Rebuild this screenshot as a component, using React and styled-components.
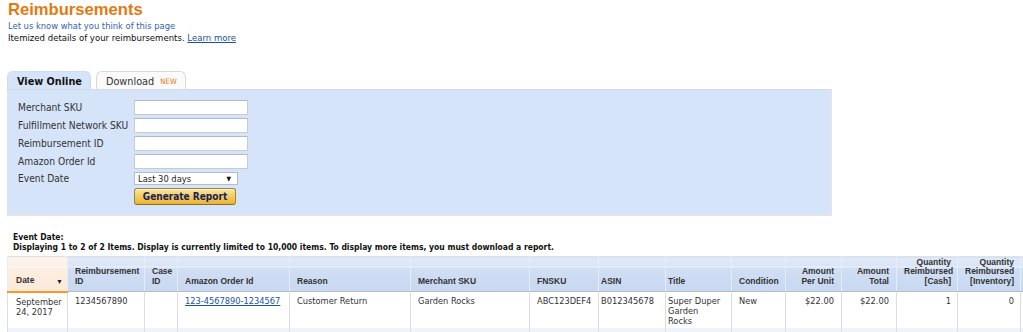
import React from 'react';
import styled, { createGlobalStyle } from 'styled-components';

const GlobalStyle = createGlobalStyle`
  html, body {
    margin: 0;
    padding: 0;
    overflow: hidden;
    background: #fff;
  }
  body {
    font-family: "DejaVu Sans Condensed", "DejaVu Sans", sans-serif;
    font-stretch: condensed;
    color: #333;
  }
`;

const Page = styled.div`
  padding: 0 0 0 7px;
`;

const Title = styled.h1`
  margin: 0;
  padding-left: 1px;
  font-family: "Liberation Sans", Arial, sans-serif;
  font-stretch: normal;
  font-size: 16.6px;
  line-height: 20px;
  font-weight: bold;
  color: #e47911;
`;

const Feedback = styled.a`
  display: block;
  padding-left: 1px;
  font-size: 9.3px;
  line-height: 11px;
  color: #2f63b0;
  text-decoration: none;
`;

const Intro = styled.p`
  margin: 1px 0 0;
  padding-left: 1px;
  font-size: 9.5px;
  line-height: 11px;
  color: #111;
`;

const Link = styled.a`
  color: #1c52a3;
  text-decoration: underline;
`;

const TabBar = styled.div`
  display: flex;
  align-items: flex-end;
  gap: 5px;
  margin-top: 28px;
  height: 18px;
`;

const Tab = styled.div`
  box-sizing: border-box;
  height: 18px;
  display: flex;
  align-items: center;
  gap: 6px;
  padding: 1px 8px 0 9px;
  font-size: 10.8px;
  font-weight: ${p => (p.active ? 'bold' : 'normal')};
  color: ${p => (p.active ? '#111' : '#333')};
  background: ${p => (p.active ? '#d6e4f9' : '#fafafa')};
  border: 1px solid ${p => (p.active ? '#d0dcee' : '#d9d9d9')};
  border-bottom: none;
  border-radius: 6px 6px 0 0;
`;

const NewBadge = styled.span`
  font-size: 7.6px;
  color: #e47911;
  letter-spacing: 0.2px;
`;

const Panel = styled.div`
  box-sizing: border-box;
  width: 825px;
  height: 127px;
  padding: 10px 10px 0 11px;
  background: #d6e4f9;
  border-top: 1px solid #d6dbe3;
  border-right: 2px solid #e1e4e9;
  border-bottom: 2px solid #e1e4e9;
`;

const Form = styled.div`
  display: grid;
  grid-template-columns: 116px auto;
  grid-template-rows: 15px 15px 15px 15px 13px 17px;
  row-gap: 3px;
  align-items: center;
  justify-items: start;
`;

const Label = styled.label`
  font-size: 10.2px;
  line-height: 12px;
  color: #333;
  white-space: nowrap;
`;

const TextInput = styled.input`
  box-sizing: border-box;
  width: 114px;
  height: 15px;
  margin: 0;
  padding: 0 2px;
  background: #fff;
  border: 1px solid #c6ccd6;
  border-top-color: #b3bac5;
  outline: none;
`;

const Dropdown = styled.div`
  box-sizing: border-box;
  width: 104px;
  height: 13px;
  display: flex;
  align-items: center;
  justify-content: space-between;
  padding: 0 6px 0 3px;
  background: #fff;
  border: 1px solid #b7bcc4;
  font-size: 9.3px;
  line-height: 11px;
  color: #222;
`;

const DropArrow = styled.span`
  font-size: 6.5px;
  line-height: 8px;
  color: #111;
`;

const Button = styled.button`
  box-sizing: border-box;
  width: 102px;
  height: 17px;
  margin: 0;
  padding: 0;
  font-family: inherit;
  font-stretch: condensed;
  font-size: 10px;
  font-weight: bold;
  color: #17215a;
  background: linear-gradient(to bottom, #f9e4ae 0%, #f3cd66 45%, #ebb535 100%);
  border: 1px solid #a5852f;
  border-bottom-color: #8c6f22;
  border-radius: 3px;
  box-shadow: inset 0 1px 0 rgba(255, 255, 255, 0.6);
`;

const Summary = styled.div`
  margin: 16px 0 0;
  padding-left: 6px;
  font-size: 8.5px;
  line-height: 10px;
  font-weight: bold;
  color: #111;
`;

const Table = styled.table`
  margin-top: 4px;
  border-collapse: collapse;
  table-layout: fixed;
  width: 1024px;
  border-left: 1px solid #d3d9e2;
  border-top: 1px solid #dde3ec;
`;

const Th = styled.th`
  box-sizing: border-box;
  height: 35px;
  padding: 0 ${p => p.$pr}px 5px ${p => p.$pl}px;
  vertical-align: bottom;
  text-align: ${p => p.$align};
  white-space: nowrap;
  font-family: "Liberation Sans", Arial, sans-serif;
  font-stretch: normal;
  font-size: 8.5px;
  line-height: 9.3px;
  font-weight: bold;
  color: #333;
  border-left: 1px solid #e6edf8;
  border-right: 1px solid #e6edf8;
  border-bottom: ${p => (p.$sorted ? '2px solid #f39a2c' : '1px solid #b8bec7')};
  background: ${p =>
    p.$sorted
      ? 'linear-gradient(to bottom, #fdf4ec 0, #fbf0e6 9px, #fffaf5 9px, #fffaf5 10px, #fdefe2 10px, #fce9d9 100%)'
      : 'linear-gradient(to bottom, #e1eaf8 0, #d9e4f6 9px, #eef3fb 9px, #eef3fb 10px, #d1dff4 10px, #c7d8f1 100%)'};
`;

const DateHead = styled.div`
  display: flex;
  justify-content: space-between;
  align-items: flex-end;
`;

const SortArrow = styled.span`
  font-size: 7px;
  line-height: 9px;
  color: #222;
`;

const Tr = styled.tr`
  background: ${p => (p.$alt ? '#eef4fc' : '#fff')};
`;

const Td = styled.td`
  box-sizing: border-box;
  height: 36px;
  padding: 4px ${p => p.$pr}px 2px ${p => p.$pl}px;
  vertical-align: top;
  text-align: ${p => p.$align};
  font-size: 9.2px;
  line-height: 10px;
  color: #333;
  border-left: 1px solid #dedede;
  border-right: 1px solid #dedede;
  overflow: hidden;
`;

const columns = [
  { key: 'date', label: ['Date'], width: 60, pl: 8, pr: 4, sorted: true },
  { key: 'rid', label: ['Reimbursement', 'ID'], width: 77 },
  { key: 'case', label: ['Case', 'ID'], width: 33 },
  { key: 'order', label: ['Amazon Order Id'], width: 112, link: true },
  { key: 'reason', label: ['Reason'], width: 121 },
  { key: 'sku', label: ['Merchant SKU'], width: 119 },
  { key: 'fnsku', label: ['FNSKU'], width: 69 },
  { key: 'asin', label: ['ASIN'], width: 67, pl: 2, pr: 2 },
  { key: 'title', label: ['Title'], width: 66, pl: 2, pr: 9 },
  { key: 'cond', label: ['Condition'], width: 54 },
  { key: 'unit', label: ['Amount', 'Per Unit'], width: 56, align: 'right' },
  { key: 'total', label: ['Amount', 'Total'], width: 55, align: 'right' },
  { key: 'cash', label: ['Quantity', 'Reimbursed', '[Cash]'], width: 61, align: 'right', pr: 6 },
  { key: 'inv', label: ['Quantity', 'Reimbursed', '[Inventory]'], width: 63, align: 'right', pr: 6 },
  { key: 'more', label: [''], width: 11 },
];

const rows = [
  {
    date: 'September 24, 2017',
    rid: '1234567890',
    case: '',
    order: '123-4567890-1234567',
    reason: 'Customer Return',
    sku: 'Garden Rocks',
    fnsku: 'ABC123DEF4',
    asin: 'B012345678',
    title: 'Super Duper Garden Rocks',
    cond: 'New',
    unit: '$22.00',
    total: '$22.00',
    cash: '1',
    inv: '0',
    more: '',
  },
  {
    date: 'September 12, 2017',
    rid: '1234567801',
    case: '',
    order: '123-4567890-7654321',
    reason: 'Lost: Warehouse',
    sku: 'Garden Rocks',
    fnsku: 'ABC123DEF4',
    asin: 'B012345678',
    title: 'Super Duper Garden Rocks',
    cond: 'New',
    unit: '$22.00',
    total: '$44.00',
    cash: '2',
    inv: '0',
    more: '',
  },
];

function App() {
  return (
    <Page>
      <GlobalStyle />
      <Title>Reimbursements</Title>
      <Feedback href="#">Let us know what you think of this page</Feedback>
      <Intro>
        Itemized details of your reimbursements. <Link href="#">Learn more</Link>
      </Intro>

      <TabBar>
        <Tab active>View Online</Tab>
        <Tab>
          Download <NewBadge>NEW</NewBadge>
        </Tab>
      </TabBar>
      <Panel>
        <Form>
          <Label>Merchant SKU</Label>
          <TextInput />
          <Label>Fulfillment Network SKU</Label>
          <TextInput />
          <Label>Reimbursement ID</Label>
          <TextInput />
          <Label>Amazon Order Id</Label>
          <TextInput />
          <Label>Event Date</Label>
          <Dropdown>
            <span>Last 30 days</span>
            <DropArrow>▼</DropArrow>
          </Dropdown>
          <span />
          <Button>Generate Report</Button>
        </Form>
      </Panel>

      <Summary>
        Event Date:
        <br />
        Displaying 1 to 2 of 2 Items. Display is currently limited to 10,000 items. To display more items, you must download a report.
      </Summary>

      <Table>
        <colgroup>
          {columns.map(c => (
            <col key={c.key} style={{ width: c.width }} />
          ))}
        </colgroup>
        <thead>
          <tr>
            {columns.map(c => (
              <Th
                key={c.key}
                $align={c.align || 'left'}
                $pl={c.pl ?? 7}
                $pr={c.pr ?? 7}
                $sorted={c.sorted}
              >
                {c.sorted ? (
                  <DateHead>
                    <span>{c.label[0]}</span>
                    <SortArrow>▼</SortArrow>
                  </DateHead>
                ) : (
                  c.label.map((line, i) => (
                    <React.Fragment key={i}>
                      {i > 0 && <br />}
                      {line}
                    </React.Fragment>
                  ))
                )}
              </Th>
            ))}
          </tr>
        </thead>
        <tbody>
          {rows.map((r, ri) => (
            <Tr key={r.rid} $alt={ri % 2 === 1}>
              {columns.map(c => (
                <Td key={c.key} $align={c.align || 'left'} $pl={c.pl ?? 7} $pr={c.pr ?? 7}>
                  {c.link ? <Link href="#">{r[c.key]}</Link> : r[c.key]}
                </Td>
              ))}
            </Tr>
          ))}
        </tbody>
      </Table>
    </Page>
  );
}

export default App;
